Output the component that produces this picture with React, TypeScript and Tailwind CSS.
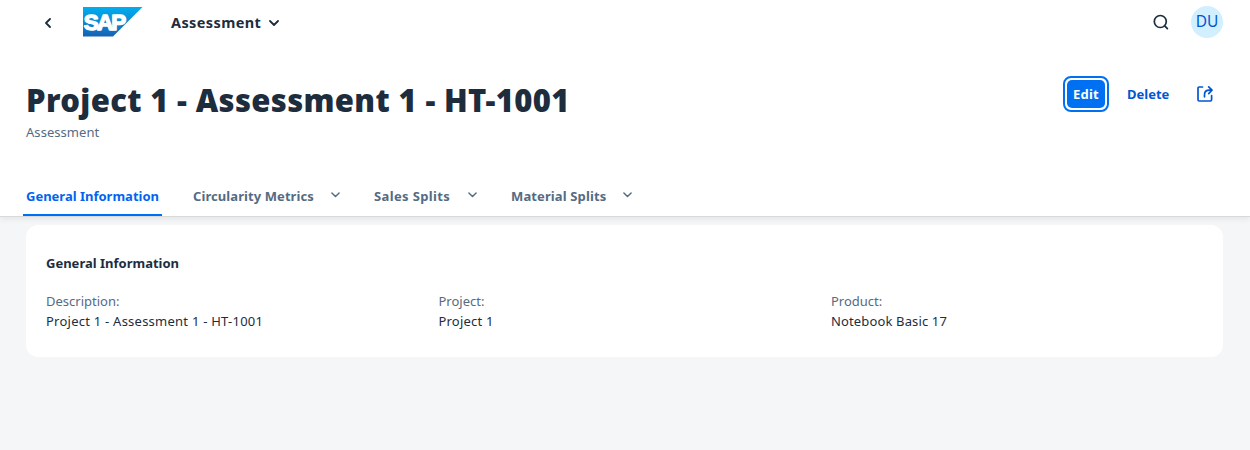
import React from "react";

const Chevron = ({ className }: { className: string }) => (
  <svg className={className} viewBox="0 0 10 6" fill="none" stroke="currentColor" strokeLinecap="round" strokeLinejoin="round">
    <path d="M1 1l4 4 4-4" />
  </svg>
);

const SapLogo = () => (
  <svg className="h-[30px] w-[60px]" viewBox="0 0 60 30">
    <defs>
      <linearGradient id="sap" x1="0" y1="0" x2="0" y2="1">
        <stop offset="0" stopColor="#00aeef" />
        <stop offset="0.45" stopColor="#0d8dd6" />
        <stop offset="1" stopColor="#1661b4" />
      </linearGradient>
    </defs>
    <path d="M0 0h59.5L30 29.5H0z" fill="url(#sap)" />
    <text x="0.8" y="23.2" fill="#fff" stroke="#fff" strokeWidth="1.4" strokeLinejoin="round" fontFamily="Liberation Sans, sans-serif" fontWeight="700" fontSize="22.5" letterSpacing="-1.9">SAP</text>
  </svg>
);

const tabs = [
  { label: "Circularity Metrics", width: "w-[121px]", gap: "mr-[34px]", tracking: "tracking-[0.08px]" },
  { label: "Sales Splits", width: "w-[77px]", gap: "mr-[34px]", tracking: "tracking-[0.36px]" },
  { label: "Material Splits", width: "w-[95px]", gap: "", tracking: "tracking-[0.12px]" },
];

const fields = [
  { label: "Description:", value: "Project 1 - Assessment 1 - HT-1001", tracking: "tracking-[0.24px]" },
  { label: "Project:", value: "Project 1", tracking: "tracking-[0.2px]" },
  { label: "Product:", value: "Notebook Basic 17", tracking: "tracking-[0.14px]" },
];

export default function App() {
  return (
    <div className="flex h-[450px] w-[1250px] flex-col overflow-hidden bg-[#f5f6f7] font-['Noto_Sans',sans-serif] text-[13px] leading-5 text-[#1d2d3e]">
      <header className="z-10 h-[217px] shrink-0 border-b border-[#d9d9d9] bg-white shadow-[0_2px_6px_rgba(34,53,72,0.09)]">
        <div className="flex h-[45px] items-center pr-[27px] pl-[45px]">
          <svg className="h-[10px] w-[6px]" viewBox="0 0 6 10" fill="none" stroke="currentColor" strokeWidth="1.8" strokeLinecap="round" strokeLinejoin="round">
            <path d="M5 1L1 5l4 4" />
          </svg>
          <div className="-mt-[1px] ml-8"><SapLogo /></div>
          <span className="-mt-[2px] ml-7 text-[14.5px] font-bold tracking-[0.4px] whitespace-nowrap">Assessment</span>
          <Chevron className="ml-2 h-[6px] w-[10px] stroke-[1.8]" />
          <svg className="-mt-[1px] ml-auto h-4 w-4" viewBox="0 0 16 16" fill="none" stroke="currentColor" strokeWidth="1.7" strokeLinecap="round">
            <circle cx="7.3" cy="7.5" r="6" />
            <path d="M11.7 11.9l2.7 2.8" />
          </svg>
          <div className="-mt-[1px] ml-[22px] flex h-8 w-8 items-center justify-center rounded-full bg-[#d1efff] text-[15.5px] text-[#0057d2]"><span className="-mt-[2px]">DU</span></div>
        </div>
        <div className="flex h-[131px] justify-between pt-[31px] pr-[37px] pl-[26px]">
          <div>
            <h1 className="text-[31px] leading-[48px] font-black tracking-[0.34px] whitespace-nowrap">Project 1 - Assessment 1 - HT-1001</h1>
            <p className="-mt-[2px] tracking-[0.05px] text-[#556b82]">Assessment</p>
          </div>
          <div className="flex h-9 items-center font-bold text-[#0057d2]">
            <button className="h-9 w-[46px] rounded-[8px] border-2 border-[#0070f2] bg-white p-[2px]">
              <span className="flex h-full items-center justify-center rounded-[5px] bg-[#0070f2] tracking-[0.2px] text-white">Edit</span>
            </button>
            <span className="ml-[18px] w-[42px] whitespace-nowrap">Delete</span>
            <svg className="ml-7 h-4 w-4" viewBox="0 0 16 16" fill="none" stroke="currentColor" strokeWidth="1.7" strokeLinecap="round" strokeLinejoin="round">
              <path d="M5.5 1H2.2Q1 1 1 2.3v11.4Q1 15 2.2 15h11.1q1.3 0 1.3-1.3V9.5" />
              <path d="M11.7.9L15 4.2l-3.3 3.4M14.7 4.2h-2.2q-5 0-5 4.6v2" />
            </svg>
          </div>
        </div>
        <nav className="flex h-10 pl-[23px] font-bold text-[#556b82]">
          <div className="mr-[31px] flex h-10 w-[139px] justify-center rounded-t-[1px] border-b-2 border-[#0070f2] pt-[10px] whitespace-nowrap text-[#0064f0]">General Information</div>
          {tabs.map((t) => (
            <div key={t.label} className={`flex pt-[10px] ${t.gap}`}>
              <span className={`whitespace-nowrap ${t.width} ${t.tracking}`}>{t.label}</span>
              <Chevron className="mt-[6px] ml-[17px] h-[5.5px] w-[9px] stroke-[1.6]" />
            </div>
          ))}
        </nav>
      </header>
      <main className="mt-2 mr-[27px] ml-[26px] h-[132px] shrink-0 rounded-xl bg-white px-5 pt-7">
        <h2 className="font-bold">General Information</h2>
        <div className="mt-[18px] grid grid-cols-[392.5px_392.5px_1fr]">
          {fields.map((f) => (
            <div key={f.label}>
              <div className="text-[#556b82]">{f.label}</div>
              <div><span className={f.tracking}>{f.value}</span></div>
            </div>
          ))}
        </div>
      </main>
    </div>
  );
}
